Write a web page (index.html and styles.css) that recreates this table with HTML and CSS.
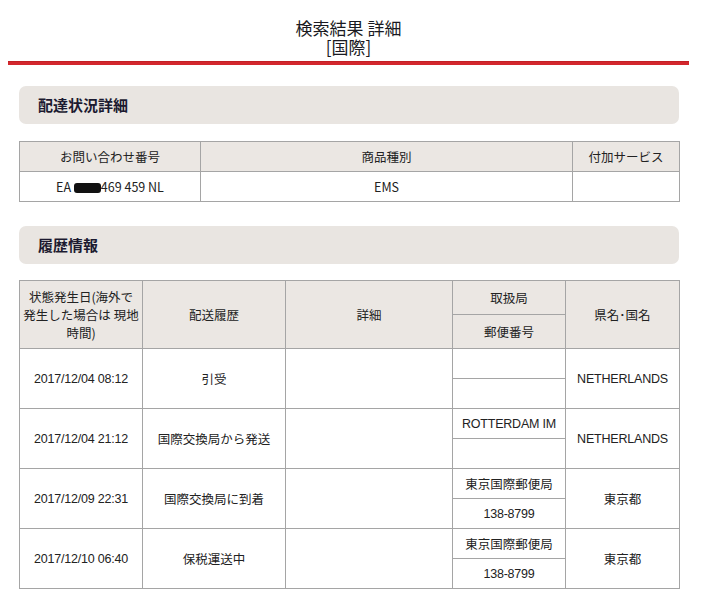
FILE: index.html
```html
<!DOCTYPE html>
<html lang="ja">
<head>
<meta charset="utf-8">
<title>検索結果 詳細</title>
<link rel="stylesheet" href="styles.css">
</head>
<body>
<div class="page">
  <h1 class="title"><span class="tline">検索結果 詳細</span><span class="tline">[国際]</span></h1>
  <div class="redline"></div>
  <div class="content">
    <h2 class="sec">配達状況詳細</h2>
    <table class="tbl tbl1">
      <colgroup><col class="c1a"><col class="c1b"><col class="c1c"></colgroup>
      <tr class="r30"><th>お問い合わせ番号</th><th>商品種別</th><th>付加サービス</th></tr>
      <tr class="r30"><td>EA <span class="redact"></span>469 459 NL</td><td>EMS</td><td></td></tr>
    </table>

    <h2 class="sec sec2">履歴情報</h2>
    <table class="tbl tbl2">
      <colgroup><col class="c2a"><col class="c2b"><col class="c2c"><col class="c2d"><col class="c2e"></colgroup>
      <tr class="h34"><th rowspan="2" class="multi">状態発生日(海外で<br>発生した場合は 現地<br>時間)</th><th rowspan="2">配送履歴</th><th rowspan="2">詳細</th><th>取扱局</th><th rowspan="2">県名･国名</th></tr>
      <tr class="h34"><th>郵便番号</th></tr>

      <tr class="r30"><td rowspan="2" class="date">2017/12/04 08:12</td><td rowspan="2">引受</td><td rowspan="2"></td><td></td><td rowspan="2" class="lat">NETHERLANDS</td></tr>
      <tr class="r30"><td></td></tr>

      <tr class="r30"><td rowspan="2" class="date">2017/12/04 21:12</td><td rowspan="2">国際交換局から発送</td><td rowspan="2"></td><td class="lat">ROTTERDAM IM</td><td rowspan="2" class="lat">NETHERLANDS</td></tr>
      <tr class="r30"><td></td></tr>

      <tr class="r30"><td rowspan="2" class="date">2017/12/09 22:31</td><td rowspan="2">国際交換局に到着</td><td rowspan="2"></td><td>東京国際郵便局</td><td rowspan="2">東京都</td></tr>
      <tr class="r30"><td class="lat">138-8799</td></tr>

      <tr class="r30"><td rowspan="2" class="date">2017/12/10 06:40</td><td rowspan="2">保税運送中</td><td rowspan="2"></td><td>東京国際郵便局</td><td rowspan="2">東京都</td></tr>
      <tr class="r30"><td class="lat">138-8799</td></tr>
    </table>
  </div>
</div>
</body>
</html>
```

FILE: styles.css
```css
html, body {
  margin: 0;
  padding: 0;
  background: #ffffff;
}
body {
  font-family: "Noto Sans CJK JP", "Noto Sans", sans-serif;
  color: #222222;
}
.page {
  width: 681px;
  margin-left: 8px;
}
.title {
  margin: 0;
  padding-top: 18px;
  font-size: 17px;
  font-weight: normal;
  text-align: center;
  color: #1a1a22;
}
.tline {
  display: block;
  height: 19px;
  line-height: 19px;
  overflow: visible;
}
.redline {
  margin-top: 5px;
  height: 4px;
  background: #d3272d;
  border-top: 1px solid #c21f25;
  box-sizing: border-box;
}
.content {
  margin-left: 11px;
  width: 660px;
}
.sec {
  margin: 21px 0 0 0;
  height: 38px;
  line-height: 38px;
  padding-left: 19px;
  font-size: 15px;
  font-weight: bold;
  color: #1c1a30;
  background: #e9e5e1;
  border-radius: 7px;
}
.sec2 {
  margin-top: 24px;
}
.tbl {
  border-collapse: collapse;
  width: 660px;
  table-layout: fixed;
  font-size: 12.5px;
  color: #222222;
}
.tbl1 {
  margin-top: 17px;
}
.tbl2 {
  margin-top: 16px;
}
.tbl th, .tbl td {
  border: 1px solid #a5a5a5;
  padding: 0;
  text-align: center;
  vertical-align: middle;
  font-weight: normal;
}
.tbl th {
  background: #ebe7e3;
}
.c1a { width: 181px; }
.c1b { width: 372px; }
.c1c { width: 107px; }
.c2a { width: 123px; }
.c2b { width: 143px; }
.c2c { width: 167px; }
.c2d { width: 113px; }
.c2e { width: 114px; }
.r30 th, .r30 td { height: 29px; }
.h34 th { height: 33px; }
.multi {
  line-height: 18px;
}
.date, .lat {
  font-family: "Liberation Sans", Arial, sans-serif;
  font-size: 12.5px;
  letter-spacing: -0.2px;
}
.redact {
  display: inline-block;
  width: 27px;
  height: 10px;
  background: #111111;
  border-radius: 3px;
  vertical-align: -1px;
}
```
